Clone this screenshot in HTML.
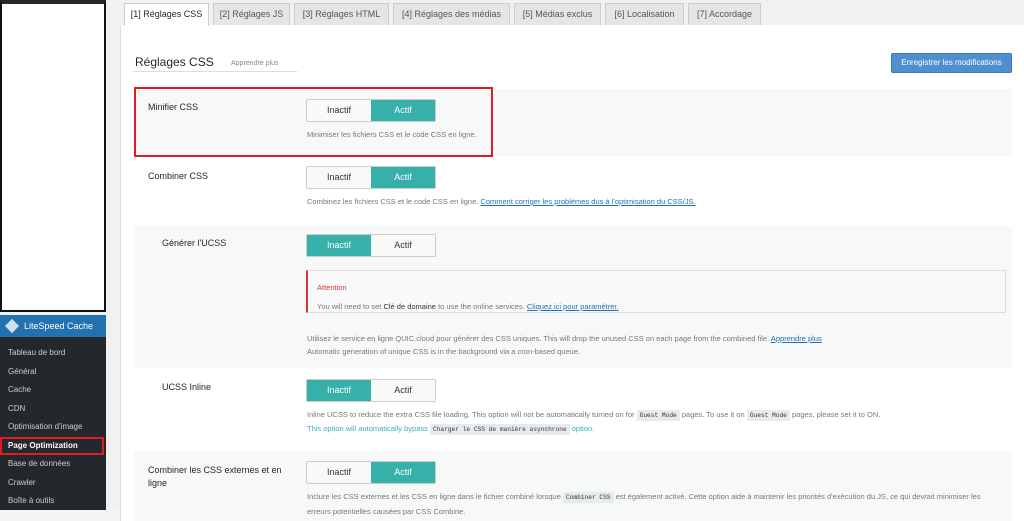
<!DOCTYPE html>
<html><head><meta charset="utf-8"><style>
*{box-sizing:border-box;margin:0;padding:0}
body{width:1024px;height:521px;overflow:hidden;background:#f1f1f1;font-family:"Liberation Sans",sans-serif;position:relative;font-size:8px;color:#555}
.a{position:absolute}
.tab{position:absolute;top:3px;height:22px;background:#e5e5e5;border:1px solid #ccc;border-bottom:none;font-size:9px;color:#555;line-height:20px;text-align:center}
.row{position:absolute;left:134px;width:878px}
.g{background:#f7f8f8}
.lab{position:absolute;font-size:9px;color:#23282d}
.tg{position:absolute;width:130px;height:23px;border:1px solid #ccc;border-radius:2px;display:flex;font-size:9px;background:#f9f9f9}
.tg span{flex:1;text-align:center;line-height:21px;color:#333}
.tg .on{background:#36b0a8;color:#fff}
.d{position:absolute;font-size:7.5px;color:#777;white-space:nowrap}
.d a{color:#2271b1;text-decoration:underline}
code{font-family:"Liberation Mono",monospace;font-size:6.2px;background:#e6ebf0;padding:2px 3px;color:#333}
.side div{height:18.5px;line-height:18.5px;padding-left:8px;color:#ccc;font-size:8px}
</style></head><body>
<div class="a" style="left:0;top:0;width:106px;height:312px;background:#fff;border:2px solid #111;border-top:4px solid #23282d"></div>
<div class="a" style="left:0;top:315px;width:106px;height:195px;background:#23282d"></div>
<div class="a" style="left:0;top:315px;width:106px;height:22px;background:#2271b1;color:#fff;font-size:9px;line-height:22px;padding-left:24px">LiteSpeed Cache</div>
<div class="a" style="left:7px;top:321px;width:10px;height:10px;background:#cfe0ee;transform:rotate(45deg)"></div>
<div class="a side" style="left:0;top:344px;width:106px">
<div>Tableau de bord</div><div>Général</div><div>Cache</div><div>CDN</div><div>Optimisation d'image</div>
<div style="color:#fff;font-weight:bold;border:2px solid #e01b24;padding-left:6px;line-height:14.5px;width:104px">Page Optimization</div>
<div>Base de données</div><div>Crawler</div><div>Boîte à outils</div></div>
<div class="a" style="left:0;top:510px;width:265px;height:11px;background:#f4f4f4"></div>
<div class="a" style="left:120px;top:25px;width:904px;height:496px;background:#fff;border-left:1px solid #ddd"></div>
<div class="tab" style="left:124px;width:85px;background:#fff;color:#23282d;height:23px">[1] Réglages CSS</div>
<div class="tab" style="left:213px;width:77px">[2] Réglages JS</div>
<div class="tab" style="left:294px;width:95px">[3] Réglages HTML</div>
<div class="tab" style="left:393px;width:117px">[4] Réglages des médias</div>
<div class="tab" style="left:514px;width:87px">[5] Médias exclus</div>
<div class="tab" style="left:605px;width:79px">[6] Localisation</div>
<div class="tab" style="left:688px;width:73px">[7] Accordage</div>
<div class="a" style="left:135px;top:55px;font-size:12px;color:#23282d">Réglages CSS</div>
<div class="a" style="left:231px;top:60px;font-size:7px;color:#888">Apprendre plus</div>
<div class="a" style="left:133px;top:71px;width:164px;height:1px;background:#ddd"></div>
<div class="a" style="left:891px;top:53px;width:121px;height:20px;background:#4f8fcf;border:1px solid #3a78b8;border-radius:2px;color:#fff;font-size:8px;line-height:18px;text-align:center">Enregistrer les modifications</div>

<div class="row g" style="top:89px;height:67px"></div>
<div class="a" style="left:134px;top:87px;width:359px;height:70px;border:2px solid #e01b24"></div>
<div class="lab" style="left:148px;top:102px">Minifier CSS</div>
<div class="tg" style="left:306px;top:99px"><span>Inactif</span><span class="on">Actif</span></div>
<div class="d" style="left:307px;top:130px">Minimiser les fichiers CSS et le code CSS en ligne.</div>

<div class="lab" style="left:148px;top:171px">Combiner CSS</div>
<div class="tg" style="left:306px;top:166px"><span>Inactif</span><span class="on">Actif</span></div>
<div class="d" style="left:307px;top:197px">Combinez les fichiers CSS et le code CSS en ligne. <a>Comment corriger les problèmes dus à l'optimisation du CSS/JS.</a></div>

<div class="row g" style="top:226px;height:142px"></div>
<div class="lab" style="left:162px;top:238px">Générer l'UCSS</div>
<div class="tg" style="left:306px;top:234px"><span class="on">Inactif</span><span>Actif</span></div>
<div class="a" style="left:306px;top:270px;width:700px;height:43px;background:#f9f9f9;border:1px solid #ddd;border-left:2px solid #d63638"></div>
<div class="d" style="left:317px;top:283px;color:#d63638">Attention</div>
<div class="d" style="left:317px;top:302px">You will need to set <span style="color:#333">Clé de domaine</span> to use the online services. <a>Cliquez ici pour paramétrer.</a></div>
<div class="d" style="left:307px;top:334px">Utilisez le service en ligne QUIC.cloud pour générer des CSS uniques. This will drop the unused CSS on each page from the combined file. <a>Apprendre plus</a></div>
<div class="d" style="left:307px;top:347px">Automatic generation of unique CSS is in the background via a cron-based queue.</div>

<div class="lab" style="left:162px;top:382px">UCSS Inline</div>
<div class="tg" style="left:306px;top:379px"><span class="on">Inactif</span><span>Actif</span></div>
<div class="d" style="left:307px;top:410px">Inline UCSS to reduce the extra CSS file loading. This option will not be automatically turned on for <code>Guest Mode</code> pages. To use it on <code>Guest Mode</code> pages, please set it to ON.</div>
<div class="d" style="left:307px;top:424px;color:#36b0a8">This option will automatically bypass <code>Charger le CSS de manière asynchrone</code> option.</div>

<div class="row g" style="top:451px;height:70px"></div>
<div class="lab" style="left:148px;top:464px;line-height:13px">Combiner les CSS externes et en<br>ligne</div>
<div class="tg" style="left:306px;top:461px"><span>Inactif</span><span class="on">Actif</span></div>
<div class="d" style="left:307px;top:492px">Inclure les CSS externes et les CSS en ligne dans le fichier combiné lorsque <code>Combiner CSS</code> est également activé. Cette option aide à maintenir les priorités d'exécution du JS, ce qui devrait minimiser les</div>
<div class="d" style="left:307px;top:507px">erreurs potentielles causées par CSS Combine.</div>
</body></html>
